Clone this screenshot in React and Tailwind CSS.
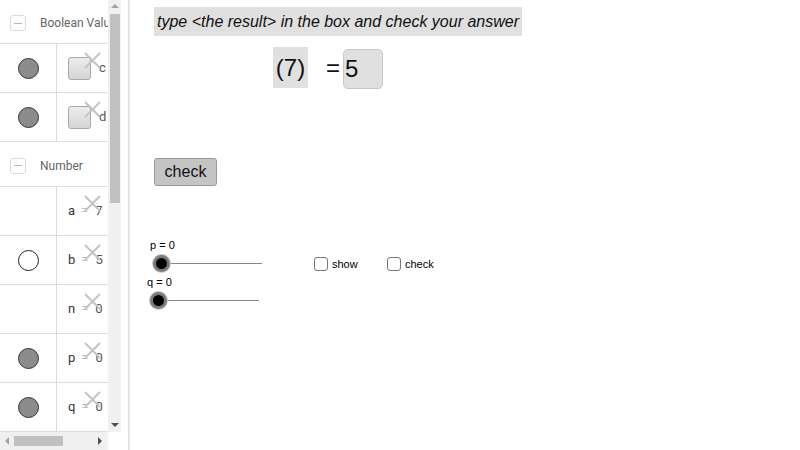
const rows = [
    { kind: 'bool', dot: 'filled', label: 'c' },
    { kind: 'bool', dot: 'filled', label: 'd' },
]

const numbers = [
    { name: 'a', value: '7', dot: null },
    { name: 'b', value: '5', dot: 'empty' },
    { name: 'n', value: '0', dot: null },
    { name: 'p', value: '0', dot: 'filled' },
    { name: 'q', value: '0', dot: 'filled' },
]

function Cross() {
    return (
        <svg className="absolute right-[6px] top-[7px]" width="19" height="19" viewBox="0 0 19 19">
            <path d="M2 2 L17 17 M17 2 L2 17" stroke="#c4c4c4" strokeWidth="2" fill="none" />
        </svg>
    )
}

function Dot({ type }) {
    if (type === 'filled') {
        return <div className="w-[21px] h-[21px] rounded-full bg-[#8c8c8c] border border-[#333]" />
    }
    if (type === 'empty') {
        return <div className="w-[21px] h-[21px] rounded-full bg-white border border-[#222]" />
    }
    return null
}

function GroupHeader({ title, height }) {
    return (
        <div className={`flex items-center border-b border-[#dcdcdc] pt-[3px] ${height}`}>
            <div className="ml-[10px] w-[16px] h-[16px] shrink-0 rounded-[3px] border border-[#dadada] flex items-center justify-center">
                <div className="w-[8px] h-px bg-[#b5b5b5]" />
            </div>
            <span className="ml-[14px] text-[12px] text-[#666] whitespace-nowrap">{title}</span>
        </div>
    )
}

function Row({ dot, children }) {
    return (
        <div className="flex h-[49px] border-b border-[#dcdcdc]">
            <div className="w-[57px] shrink-0 flex items-center justify-center border-r border-[#dcdcdc]">
                <Dot type={dot} />
            </div>
            <div className="relative flex-1 flex items-center pl-[11px] overflow-hidden">
                {children}
                <Cross />
            </div>
        </div>
    )
}

function AlgebraPanel() {
    return (
        <div className="w-[121px] shrink-0 flex flex-col h-[450px]">
            <div className="flex h-[432px]">
                <div className="w-[108px] overflow-hidden font-['Roboto',sans-serif]">
                    <GroupHeader title="Boolean Value" height="h-[44px]" />
                    {rows.map((r) => (
                        <Row key={r.label} dot={r.dot}>
                            <div className="w-[23px] h-[23px] shrink-0 rounded-[3px] border border-[#a8a8a8] bg-gradient-to-b from-[#ececec] to-[#d6d6d6]" />
                            <span className="ml-[8px] text-[13px] text-[#555]">{r.label}</span>
                        </Row>
                    ))}
                    <GroupHeader title="Number" height="h-[45px]" />
                    {numbers.map((n) => (
                        <Row key={n.name} dot={n.dot}>
                            <span className="text-[13px] text-[#333] whitespace-nowrap flex">
                                <span>{n.name}</span>
                                <span className="ml-[6px] text-[#bbb]">=</span>
                                <span className="ml-[7px] text-[#555]">{n.value}</span>
                            </span>
                        </Row>
                    ))}
                </div>
                <div className="w-[13px] bg-[#f0f0f0] flex flex-col items-center">
                    <div className="h-[12px] flex items-center">
                        <div className="w-0 h-0 border-l-[4px] border-r-[4px] border-b-[4px] border-l-transparent border-r-transparent border-b-[#a3a3a3]" />
                    </div>
                    <div className="mt-[2px] w-[10px] h-[189px] bg-[#c1c1c1]" />
                    <div className="flex-1" />
                    <div className="h-[14px] flex items-center">
                        <div className="w-0 h-0 border-l-[4px] border-r-[4px] border-t-[4px] border-l-transparent border-r-transparent border-t-[#505050]" />
                    </div>
                </div>
            </div>
            <div className="flex h-[18px]">
                <div className="w-[108px] bg-[#f0f0f0] flex items-center">
                    <div className="ml-[5px] w-0 h-0 border-t-[4px] border-b-[4px] border-r-[4px] border-t-transparent border-b-transparent border-r-[#a3a3a3]" />
                    <div className="ml-[5px] w-[49px] h-[10px] bg-[#c1c1c1]" />
                    <div className="flex-1" />
                    <div className="mr-[6px] w-0 h-0 border-t-[4px] border-b-[4px] border-l-[4px] border-t-transparent border-b-transparent border-l-[#505050]" />
                </div>
                <div className="w-[13px] bg-white" />
            </div>
        </div>
    )
}

function Slider({ label, top, left }) {
    return (
        <div className="absolute" style={{ top, left }}>
            <div className="text-[11px] leading-[13px] text-black">{label}</div>
            <div className="relative h-[20px] w-[120px] mt-[2px]">
                <div className="absolute left-[11px] top-[9px] w-[101px] h-px bg-[#888]" />
                <div className="absolute left-[3px] top-[1px] w-[17px] h-[17px] rounded-full bg-black border-[3px] border-[#7a7a7a] shadow-[0_0_0_1px_#c8c8c8]" />
            </div>
        </div>
    )
}

function Checkbox({ label, left }) {
    return (
        <div className="absolute top-[256px] flex items-center" style={{ left }}>
            <div className="w-[14px] h-[14px] rounded-[3px] border border-[#777] bg-white" />
            <span className="ml-[4px] text-[11px] text-black">{label}</span>
        </div>
    )
}

function Graphics() {
    return (
        <div className="relative flex-1 h-[450px] bg-white font-['Liberation_Sans',Arial,sans-serif]">
            <div className="absolute left-[24px] top-[7px] w-[368px] h-[29px] bg-[#e0e0e0] flex items-center pl-[3px]">
                <span className="italic text-[16px] text-[#111] whitespace-nowrap">
                    type &lt;the result&gt; in the box and check your answer
                </span>
            </div>
            <div className="absolute left-[143px] top-[47px] w-[35px] h-[41px] bg-[#e0e0e0] flex items-center justify-center text-[24px] text-[#111]">
                (7)
            </div>
            <div className="absolute left-[196px] top-[50px] text-[24px] text-[#111]">=</div>
            <div className="absolute left-[213px] top-[49px] w-[40px] h-[40px] rounded-[5px] border border-[#c8c8c8] bg-[#e0e0e0] flex items-center pl-[1px] text-[24px] text-[#111]">
                5
            </div>
            <div className="absolute left-[24px] top-[158px] w-[63px] h-[28px] rounded-[3px] border border-[#999] bg-[#c4c4c4] flex items-center justify-center text-[16px] text-[#111]">
                check
            </div>
            <Slider label="p = 0" top={239} left={20} />
            <Slider label="q = 0" top={276} left={17} />
            <Checkbox label="show" left={184} />
            <Checkbox label="check" left={257} />
        </div>
    )
}

export default function App() {
    return (
        <div className="w-[800px] h-[450px] flex overflow-hidden bg-white">
            <AlgebraPanel />
            <div className="w-[7px] bg-white" />
            <div className="w-[2px] h-[450px] bg-[#e4e4e4]" />
            <Graphics />
        </div>
    )
}
